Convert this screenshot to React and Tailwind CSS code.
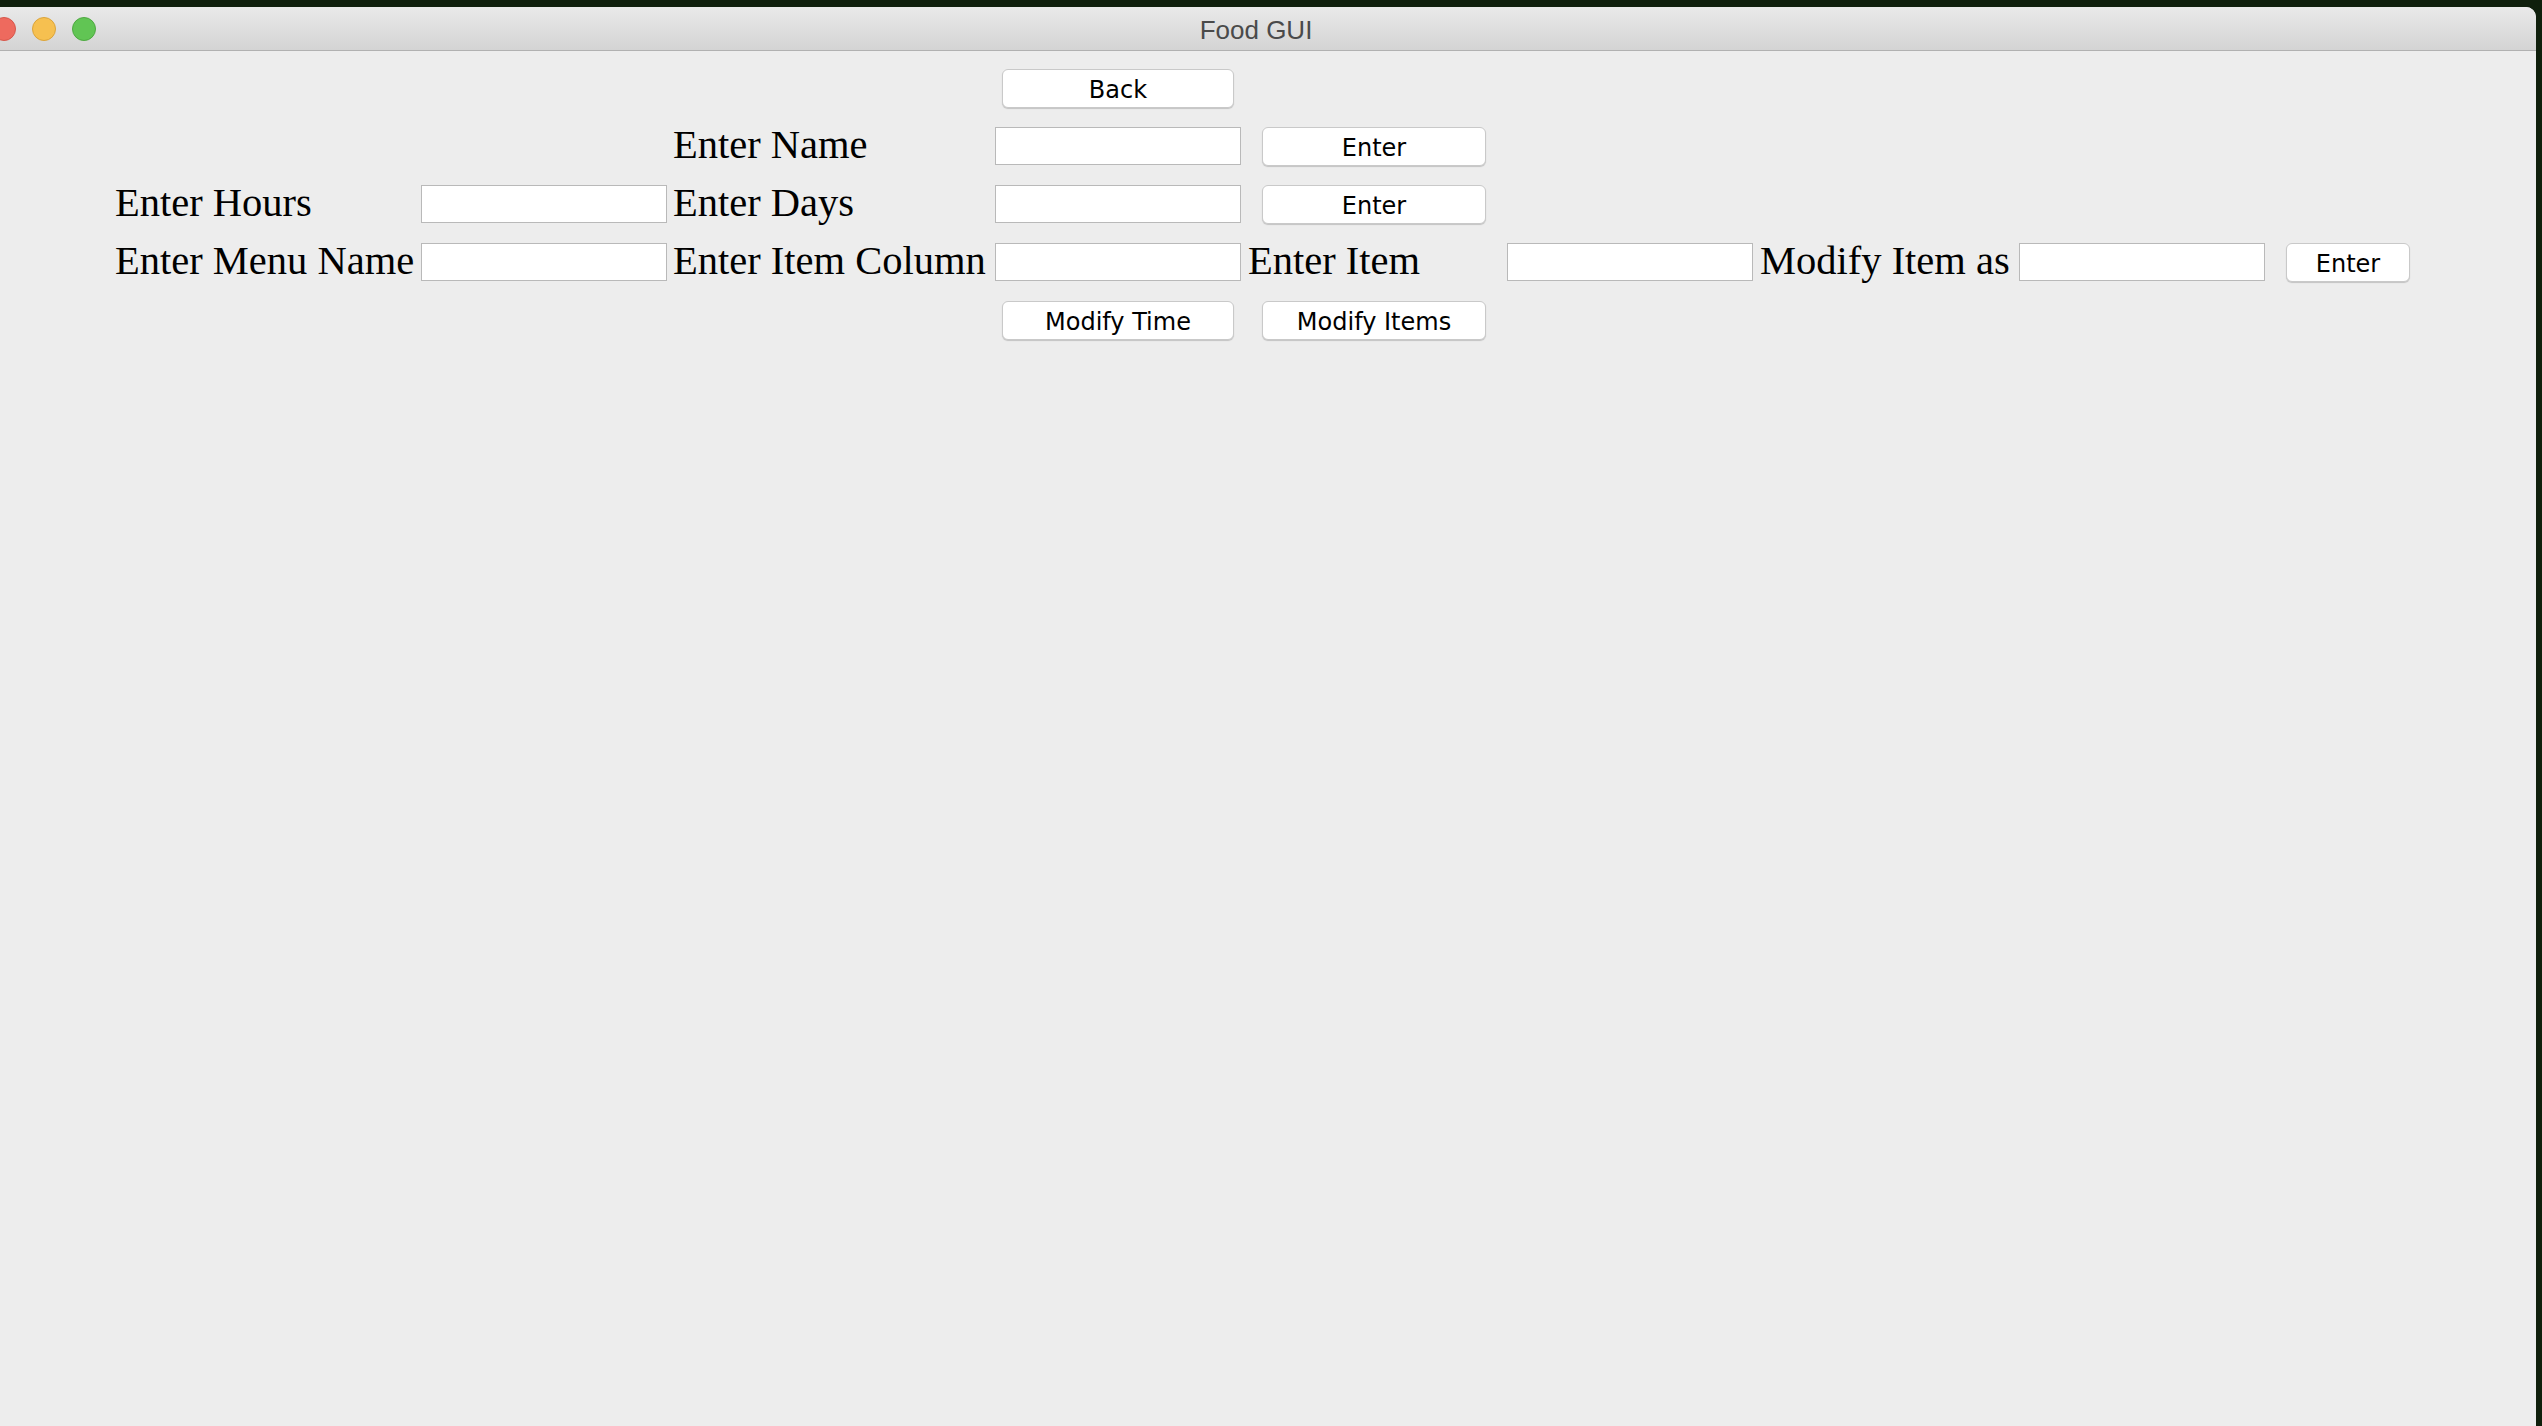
import React from 'react';

const serif = { fontFamily: '"Liberation Serif", "Times New Roman", serif' };

const Label = ({ children, col, row }) => (
  <span
    className={`text-[40.5px] leading-[46px] -mt-[2px] text-black whitespace-nowrap ${col} ${row}`}
    style={serif}
  >
    {children}
  </span>
);

const Field = ({ col, row }) => (
  <input
    type="text"
    className={`w-[246px] h-[38px] bg-white border border-[#b9b9b9] outline-none ${col} ${row}`}
  />
);

const Button = ({ children, col, row, className = '' }) => (
  <button
    className={`h-[39px] pt-[2px] bg-white border border-[#c9c9c9] rounded-[6px] shadow-[0_1px_1px_rgba(0,0,0,0.18)] text-[24px] text-black font-['DejaVu_Sans',sans-serif] ${col} ${row} ${className}`}
  >
    {children}
  </button>
);

const App = () => {
  return (
    <div className="w-full h-screen overflow-hidden bg-[#0f1f0c] flex">
      {/* Window */}
      <div className="-ml-[24px] mt-[7px] w-[2560px] flex flex-col rounded-tr-[10px] rounded-tl-[10px] overflow-hidden bg-[#ededed]">
        {/* Title bar */}
        <div className="h-[44px] grid grid-cols-[1fr_auto_1fr] items-center bg-gradient-to-b from-[#e9e9e9] to-[#d4d4d4] border-b border-[#b1b1b1]">
          <div className="flex items-center gap-[16px] pl-[16px] pt-[1px]">
            <span className="w-[24px] h-[24px] rounded-full bg-[#ee6a5e] border border-[#d5574b]" />
            <span className="w-[24px] h-[24px] rounded-full bg-[#f6c050] border border-[#dba43a]" />
            <span className="w-[24px] h-[24px] rounded-full bg-[#61c554] border border-[#4ea941]" />
          </div>
          <span className="text-[26px] text-[#4a4a4a] font-['Liberation_Sans',Arial,sans-serif] pt-[3px]">
            Food GUI
          </span>
          <div />
        </div>

        {/* Content */}
        <div className="flex-1 pl-[139px] pt-[8px]">
          <div className="grid grid-cols-[306px_252px_322px_253px_259px_253px_259px_267px_124px] grid-rows-[58px_58px_58px_58px_58px] items-center">
            <Button col="col-start-4" row="row-start-1" className="ml-[7px] w-[232px]">Back</Button>

            <Label col="col-start-3" row="row-start-2">Enter Name</Label>
            <Field col="col-start-4" row="row-start-2" />
            <Button col="col-start-5" row="row-start-2" className="ml-[14px] w-[224px]">Enter</Button>

            <Label col="col-start-1" row="row-start-3">Enter Hours</Label>
            <Field col="col-start-2" row="row-start-3" />
            <Label col="col-start-3" row="row-start-3">Enter Days</Label>
            <Field col="col-start-4" row="row-start-3" />
            <Button col="col-start-5" row="row-start-3" className="ml-[14px] w-[224px]">Enter</Button>

            <Label col="col-start-1" row="row-start-4">Enter Menu Name</Label>
            <Field col="col-start-2" row="row-start-4" />
            <Label col="col-start-3" row="row-start-4">Enter Item Column</Label>
            <Field col="col-start-4" row="row-start-4" />
            <Label col="col-start-5" row="row-start-4">Enter Item</Label>
            <Field col="col-start-6" row="row-start-4" />
            <Label col="col-start-7" row="row-start-4">Modify Item as</Label>
            <Field col="col-start-8" row="row-start-4" />
            <Button col="col-start-9" row="row-start-4" className="w-[124px]">Enter</Button>

            <Button col="col-start-4" row="row-start-5" className="ml-[7px] w-[232px]">Modify Time</Button>
            <Button col="col-start-5" row="row-start-5" className="ml-[14px] w-[224px]">Modify Items</Button>
          </div>
        </div>
      </div>
    </div>
  );
};

export default App;
